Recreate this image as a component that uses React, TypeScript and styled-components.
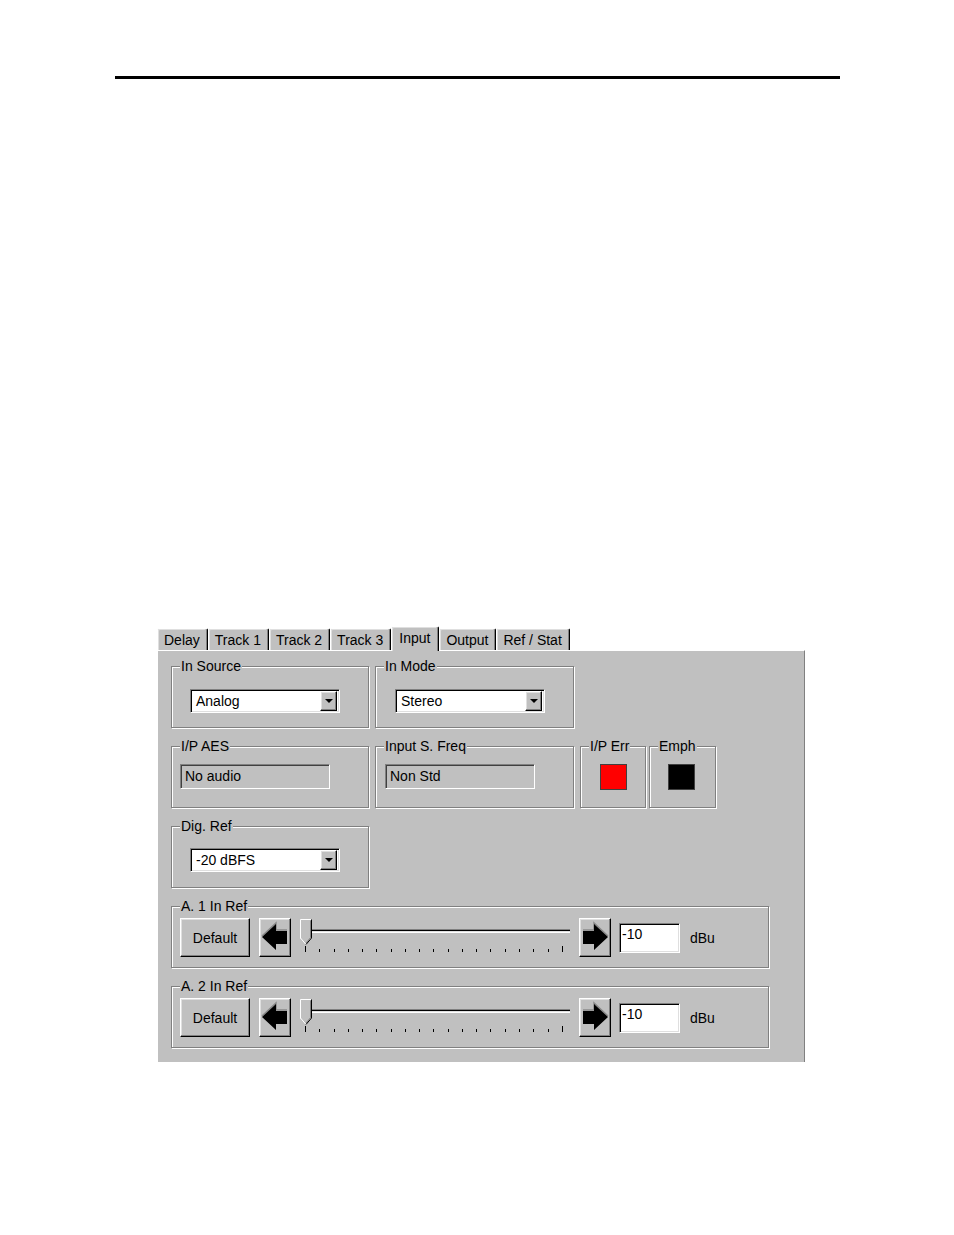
import React from 'react';
import styled, { createGlobalStyle, css } from 'styled-components';

const GlobalStyle = createGlobalStyle`
  html, body {
    margin: 0;
    padding: 0;
    background: #fff;
  }
  body {
    font-family: "Liberation Sans", Arial, sans-serif;
    font-size: 14px;
    color: #000;
  }
`;

// Bordes estilo Windows clásico
const raised = css`
  box-sizing: border-box;
  background: #c0c0c0;
  border-top: 1px solid #fff;
  border-left: 1px solid #fff;
  border-right: 1px solid #000;
  border-bottom: 1px solid #000;
  box-shadow: inset -1px -1px #808080, inset 1px 1px #dfdfdf;
`;

const sunken = css`
  box-sizing: border-box;
  border-top: 1px solid #808080;
  border-left: 1px solid #808080;
  border-right: 1px solid #fff;
  border-bottom: 1px solid #fff;
  box-shadow: inset 1px 1px #000, inset -1px -1px #dfdfdf;
`;

const Page = styled.div`
  width: 954px;
  height: 1235px;
  padding-top: 76px;
  box-sizing: border-box;
`;

const HeaderRule = styled.div`
  margin-left: 115px;
  width: 725px;
  height: 3px;
  background: #000;
`;

const Window = styled.div`
  margin: 547px 0 0 157px;
  width: 648px;
`;

const TabStrip = styled.div`
  display: flex;
  align-items: flex-end;
  height: 24px;
`;

const Tab = styled.div<{ $active?: boolean }>`
  position: relative;
  z-index: ${p => (p.$active ? 2 : 1)};
  box-sizing: border-box;
  height: ${p => (p.$active ? 25 : 22)}px;
  margin-bottom: ${p => (p.$active ? -1 : 0)}px;
  padding: ${p => (p.$active ? '3px 8px 0 7px' : '3px 7px 0 6px')};
  background: #c0c0c0;
  border-top: 1px solid #fff;
  border-left: 1px solid #fff;
  border-right: 1px solid #000;
  box-shadow: inset -1px 0 #808080, inset 1px 1px #dfdfdf;
  border-radius: 2px 2px 0 0;
  line-height: 16px;
  white-space: nowrap;
`;

const Panel = styled.div`
  box-sizing: border-box;
  height: 412px;
  background: #c0c0c0;
  border-top: 1px solid #fff;
  border-left: 1px solid #fff;
  border-right: 1px solid #808080;
  padding: 7px 0 0 13px;
  display: flex;
  flex-direction: column;
  gap: 10px;
`;

const Row = styled.div<{ $gap?: number }>`
  display: flex;
  align-items: flex-start;
  gap: ${p => p.$gap ?? 6}px;
`;

const GroupBox = styled.fieldset<{ $w: number; $h?: number }>`
  box-sizing: border-box;
  width: ${p => p.$w}px;
  height: ${p => p.$h ?? 70}px;
  margin: 0;
  padding: 0;
  min-inline-size: 0;
  border: 1px solid #808080;
  box-shadow: inset 1px 1px #fff, 1px 1px #fff;
`;

const Legend = styled.legend`
  margin-left: 8px;
  padding: 0 1px;
  line-height: 16px;
  background: #c0c0c0;
`;

const GroupBody = styled.div<{ $top: number; $left: number }>`
  display: flex;
  align-items: center;
  padding: ${p => p.$top}px 0 0 ${p => p.$left}px;
`;

const Combo = styled.div`
  ${sunken};
  width: 150px;
  height: 24px;
  display: flex;
  align-items: center;
  background: #fff;
  padding: 2px;
`;

const ComboText = styled.span`
  flex: 1;
  padding-left: 3px;
  line-height: 16px;
`;

const DropButton = styled.div`
  ${raised};
  width: 17px;
  height: 20px;
  display: flex;
  align-items: center;
  justify-content: center;

  &::after {
    content: '';
    border-left: 4px solid transparent;
    border-right: 4px solid transparent;
    border-top: 4px solid #000;
  }
`;

const ReadField = styled.div`
  ${sunken};
  width: 150px;
  height: 25px;
  padding: 3px 4px 0;
  line-height: 17px;
  background: #c0c0c0;
  box-shadow: inset 1px 1px #404040;
`;

const Indicator = styled.div<{ $color: string }>`
  box-sizing: border-box;
  width: 27px;
  height: 26px;
  background: ${p => p.$color};
  border: 1px solid #404040;
`;

const PushButton = styled.div<{ $w: number }>`
  ${raised};
  width: ${p => p.$w}px;
  height: 39px;
  display: flex;
  align-items: center;
  justify-content: center;
  flex-shrink: 0;
`;

const Slider = styled.div`
  position: relative;
  width: 274px;
  height: 39px;
  margin: 0 7px;
`;

const Track = styled.div`
  box-sizing: border-box;
  height: 4px;
  margin: 11px 2px 0 6px;
  border-top: 1px solid #808080;
  border-bottom: 1px solid #fff;
  background: linear-gradient(#000 50%, #dfdfdf 50%);
`;

const Ticks = styled.div`
  display: flex;
  align-items: flex-end;
  justify-content: space-between;
  height: 6px;
  margin: 13px 9px 0 7px;
`;

const Tick = styled.div<{ $long?: boolean }>`
  width: 1px;
  height: ${p => (p.$long ? 6 : 3)}px;
  background: #000;
`;

const Thumb = styled.svg`
  position: absolute;
  left: 2px;
  top: 1px;
`;

const ValueBox = styled.div`
  ${sunken};
  width: 61px;
  height: 30px;
  margin-left: 8px;
  padding: 2px 2px 0;
  line-height: 16px;
  background: #fff;
`;

const Unit = styled.span`
  margin-left: 10px;
`;

const tabs = ['Delay', 'Track 1', 'Track 2', 'Track 3', 'Input', 'Output', 'Ref / Stat'];

const Arrow: React.FC<{ dir: 'left' | 'right' }> = ({ dir }) => {
  const pts = [
    [2, 17], [16, 4], [16, 11], [27, 11], [27, 24], [16, 24], [16, 30],
  ];
  const fx = (x: number) => (dir === 'left' ? x : 30 - x);
  const body = pts.map(([x, y]) => `${fx(x)},${y}`).join(' ');
  const edge = [[2, 17], [16, 4], [16, 11], [27, 11]].map(([x, y]) => `${fx(x)},${y - 1}`).join(' ');
  return (
    <svg width="30" height="35" viewBox="0 0 30 35">
      <polyline points={edge} fill="none" stroke="#8a8a8a" strokeWidth="1.5" />
      <polygon points={body} fill="#000" />
    </svg>
  );
};

const SliderThumb: React.FC = () => (
  <Thumb width="12" height="26" viewBox="0 0 12 26">
    <polygon points="0.5,0.5 11.5,0.5 11.5,19 6,25.5 0.5,19" fill="#c0c0c0" />
    <polyline points="0.5,19.5 0.5,0.5 11,0.5" fill="none" stroke="#fff" />
    <line x1="0.5" y1="19" x2="6" y2="25.5" stroke="#fff" />
    <polyline points="11.5,0.5 11.5,19 6,25.5" fill="none" stroke="#000" />
    <polyline points="10.5,1.5 10.5,18.7 6,24" fill="none" stroke="#808080" />
  </Thumb>
);

const LevelControl: React.FC<{ label: string; value: string }> = ({ label, value }) => (
  <GroupBox $w={598}>
    <Legend>{label}</Legend>
    <GroupBody $top={4} $left={8}>
      <PushButton $w={70}>Default</PushButton>
      <PushButton $w={32} style={{ marginLeft: 9 }}>
        <Arrow dir="left" />
      </PushButton>
      <Slider>
        <Track />
        <Ticks>
          {Array.from({ length: 19 }).map((_, i) => (
            <Tick key={i} $long={i === 0 || i === 18} />
          ))}
        </Ticks>
        <SliderThumb />
      </Slider>
      <PushButton $w={32}>
        <Arrow dir="right" />
      </PushButton>
      <ValueBox>{value}</ValueBox>
      <Unit>dBu</Unit>
    </GroupBody>
  </GroupBox>
);

const App: React.FC = () => (
  <>
    <GlobalStyle />
    <Page>
      <HeaderRule />
      <Window>
        <TabStrip>
          {tabs.map(t => (
            <Tab key={t} $active={t === 'Input'}>
              {t}
            </Tab>
          ))}
        </TabStrip>
        <Panel>
          <Row>
            <GroupBox $w={198}>
              <Legend>In Source</Legend>
              <GroupBody $top={15} $left={18}>
                <Combo>
                  <ComboText>Analog</ComboText>
                  <DropButton />
                </Combo>
              </GroupBody>
            </GroupBox>
            <GroupBox $w={199}>
              <Legend>In Mode</Legend>
              <GroupBody $top={15} $left={19}>
                <Combo>
                  <ComboText>Stereo</ComboText>
                  <DropButton />
                </Combo>
              </GroupBody>
            </GroupBox>
          </Row>
          <Row>
            <GroupBox $w={198}>
              <Legend>I/P AES</Legend>
              <GroupBody $top={10} $left={8}>
                <ReadField>No audio</ReadField>
              </GroupBody>
            </GroupBox>
            <GroupBox $w={199}>
              <Legend>Input S. Freq</Legend>
              <GroupBody $top={10} $left={9}>
                <ReadField>Non Std</ReadField>
              </GroupBody>
            </GroupBox>
            <Row $gap={3}>
              <GroupBox $w={66}>
                <Legend>I/P Err</Legend>
                <GroupBody $top={10} $left={19}>
                  <Indicator $color="#ff0000" />
                </GroupBody>
              </GroupBox>
              <GroupBox $w={67}>
                <Legend>Emph</Legend>
                <GroupBody $top={10} $left={18}>
                  <Indicator $color="#000" />
                </GroupBody>
              </GroupBox>
            </Row>
          </Row>
          <Row>
            <GroupBox $w={198}>
              <Legend>Dig. Ref</Legend>
              <GroupBody $top={14} $left={18}>
                <Combo>
                  <ComboText>-20 dBFS</ComboText>
                  <DropButton />
                </Combo>
              </GroupBody>
            </GroupBox>
          </Row>
          <LevelControl label="A. 1 In Ref" value="-10" />
          <LevelControl label="A. 2 In Ref" value="-10" />
        </Panel>
      </Window>
    </Page>
  </>
);

export default App;
